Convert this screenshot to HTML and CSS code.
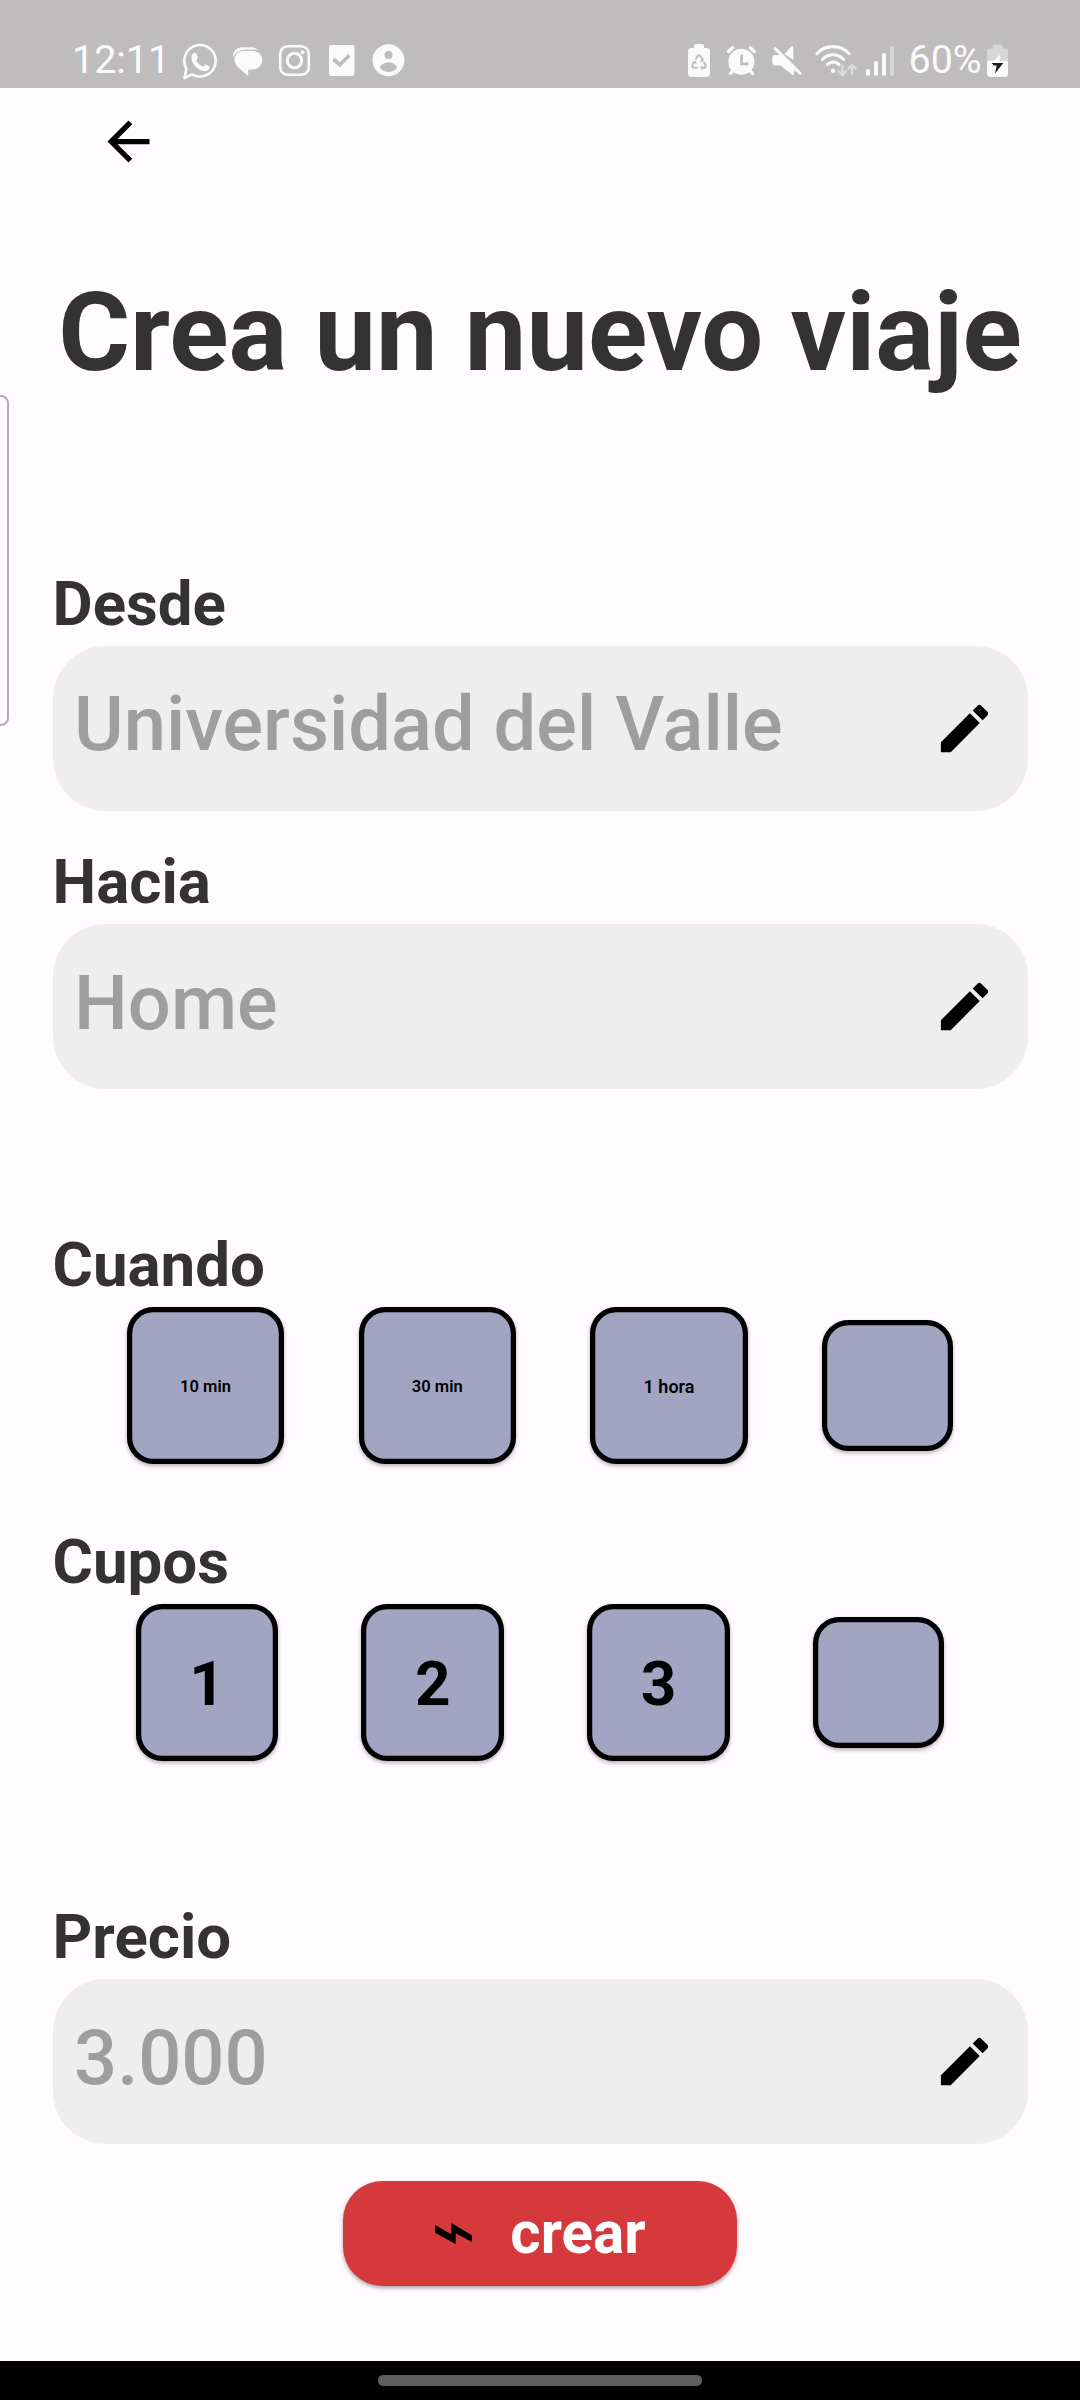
FILE: index.html
```html
<!DOCTYPE html>
<html lang="es">
<head>
<meta charset="utf-8">
<title>Crea un nuevo viaje</title>
<link rel="stylesheet" href="styles.css">
</head>
<body>
<div class="screen">
  <header class="status">
    <span class="clock">12:11</span>
    <svg class="notifications" viewBox="180 40 230 40" width="230" height="40">
      <g fill="none" stroke="#fafafa" stroke-width="2.6" stroke-linejoin="round">
        <path d="M184.400 78.200l2-9.600a15.700 15.700 0 1 1 5.700 5.700z"/>
        <rect x="280.2" y="46.2" width="28.6" height="28.6" rx="7.5"/>
        <circle cx="294.5" cy="60.5" r="7.2" stroke-width="3"/>
      </g>
      <g fill="#fafafa">
        <path d="M192.300 54.500c.8-1.700 2.900-2.200 3.900-1.200l1.600 4c.3 1.200-1.700 2.300-1.500 3.300 1.400 2.700 3.600 4.800 6.500 6 1.200.2 2-2.500 3.200-2.200l3.500 1.800c.8 1.700-.7 4-2.700 4.600-4.700 1.300-9.700-2-12.700-6-2.200-3-3.500-7-1.800-10.300z"/>
        <circle cx="302.600" cy="52.300" r="2"/>
        <path d="M233.200 58c-1.100-6 3-10.800 9-10.800h8c4 0 6.500 1.200 8 3.200-4-1.300-9-1-13-.8-6 .4-10.500 3.200-12 8.400z"/>
        <path d="M244 50.800h8.500c6 0 9.800 4.200 9.800 9.200s-4 9.400-9.800 9.400h-4.300V76l-7.500-6.500c-3.500-3-6.200-6-6.200-9.800 0-5 4-8.900 9.500-8.900z"/>
        <path fill-rule="evenodd" d="M331 45h21.500a2 2 0 0 1 2 2v27a2 2 0 0 1-2 2H331a2 2 0 0 1-2-2V47a2 2 0 0 1 2-2zM332.300 60.700l7.500 6.600 10.600-10.600-2.200-2.700-8.400 8.200-5-4.600z"/>
        <path fill-rule="evenodd" d="M388.500 44.300a16 16 0 1 1 0 32 16 16 0 0 1 0-32zM388.500 51a4 4 0 1 0 0 8 4 4 0 0 0 0-8zM379.700 67.800c3.500 5.500 14 5.500 17.600 0-2.500-7-15-7-17.600 0z"/>
      </g>
    </svg>
    <svg class="indicators" viewBox="680 40 180 40" width="180" height="40">
      <g fill="#fafafa">
        <path d="M695.500 44h7a1.500 1.500 0 0 1 1.500 1.500V48h2.500a3.500 3.500 0 0 1 3.500 3.500v22a3.500 3.500 0 0 1-3.500 3.500h-15a3.500 3.500 0 0 1-3.500-3.500v-22a3.500 3.500 0 0 1 3.500-3.500h2.500v-2.500a1.500 1.500 0 0 1 1.500-1.500z"/>
        <circle cx="741.400" cy="61.800" r="13"/>
        <path d="M784.500 54l7-7.700q1.800-1 1.800.5v13.200z"/>
        <path d="M772.300 58.200q0-3.300 3.500-3.300h6l12.300 12V74q-.3 1.500-2 .8l-11.500-9.300h-4.800q-3.500 0-3.500-3.300z"/>
        <circle cx="833" cy="70.700" r="2.200"/>
      </g>
      <g fill="none" stroke="#fafafa" stroke-width="3.400" stroke-linecap="round">
        <path d="M728.500 51.500l4-3.700M754.300 51.500l-4-3.700M732.500 71l-2 2.500M750.500 71l2 2.500"/>
        <path d="M775.300 48.600l24.700 24.700" stroke-width="3"/>
        <path d="M817 53.500c8.500-9.200 23.500-9.200 32 0M822.500 59.300c6-6 15-6 21 0M827.500 64.500c3.500-3.200 8-3.200 11.500 0" stroke-width="3.100"/>
      </g>
      <path d="M741.600 54.500v9.400h6.800" fill="none" stroke="#bebcbc" stroke-width="2.600"/>
      <g fill="none" stroke="#bebcbc" stroke-width="2">
        <path d="M695.500 59.500l2.200-3.600q1.300-1.500 2.600 0l2.200 3.600M703.800 62l1.700 2.900q.8 2.500-1.800 2.900h-2.700M697.500 67.800h-3.200q-2.600-.4-1.800-2.900l1.900-3.300"/>
      </g>
      <path d="M703.500 57.800v4h-4zM702.500 65.400v4.800l-2.500-2.400zM692.300 61.500l3.500-.8.800 3.600z" fill="#bebcbc"/>
      <path d="M842.300 66v9M838.800 71.500l3.500 3.500 3.500-3.500M852 74v-9M848.500 68.500l3.500-3.500 3.500 3.500" fill="none" stroke="#dadada" stroke-width="2.600" stroke-linecap="round"/>
    </svg>
    <div class="signal"><i class="bar bar-1"></i><i class="bar bar-2"></i><i class="bar bar-3"></i><i class="bar bar-4"></i></div>
    <span class="percent">60%</span>
    <svg class="battery" viewBox="987 44 22 34" width="22" height="34">
      <path d="M992.500 48.500V46a1.500 1.500 0 0 1 1.500-1.500h7a1.500 1.500 0 0 1 1.500 1.500v2.500h2.500a3.200 3.200 0 0 1 3 3V61h-21v-9.500a3.200 3.200 0 0 1 3-3z" fill="#d8d7d7"/>
      <path d="M987 63h21v10.500a3.500 3.500 0 0 1-3.500 3.500h-14a3.500 3.500 0 0 1-3.500-3.500z" fill="#fafafa"/>
      <path d="M987 61h21v2.500h-21z" fill="#fafafa"/>
      <path d="M999.500 55l-7 7h6.500l1.500-6z" fill="#fafafa"/>
      <path d="M991.700 63h11.500l-8.200 10.500 1.700-8h-3z" fill="#1c1c1c"/>
    </svg>
  </header>
  <div class="edge-panel"></div>
  <main class="content">
    <nav class="toolbar">
      <svg class="icon" viewBox="0 0 24 24"><path d="M20 11H7.830l5.590-5.590L12 4l-8 8 8 8 1.410-1.410L7.830 13H20v-2z"/></svg>
    </nav>
    <h1 class="title">Crea un nuevo viaje</h1>

    <section class="group group-from">
      <h2 class="label">Desde</h2>
      <div class="field"><span class="value">Universidad del Valle</span><svg class="icon" viewBox="0 0 24 24"><path d="M3 17.250V21h3.750L17.810 9.940l-3.750-3.750L3 17.250zM20.710 7.040c.39-.39.39-1.020 0-1.410l-2.340-2.340c-.39-.39-1.020-.39-1.410 0l-1.830 1.830 3.750 3.750 1.830-1.830z"/></svg></div>
    </section>
    <section class="group group-to">
      <h2 class="label">Hacia</h2>
      <div class="field"><span class="value">Home</span><svg class="icon" viewBox="0 0 24 24"><path d="M3 17.250V21h3.750L17.810 9.940l-3.750-3.750L3 17.250zM20.710 7.040c.39-.39.39-1.020 0-1.410l-2.340-2.340c-.39-.39-1.020-.39-1.410 0l-1.830 1.830 3.750 3.750 1.830-1.830z"/></svg></div>
    </section>
    <section class="group group-when">
      <h2 class="label">Cuando</h2>
      <div class="options">
        <button class="option wide">10 min</button>
        <button class="option wide">30 min</button>
        <button class="option wide hour">1 hora</button>
        <button class="option empty" aria-label="Otro"></button>
      </div>
    </section>
    <section class="group group-seats">
      <h2 class="label">Cupos</h2>
      <div class="options">
        <button class="option seat">1</button>
        <button class="option seat">2</button>
        <button class="option seat">3</button>
        <button class="option empty" aria-label="Otro"></button>
      </div>
    </section>
    <section class="group group-price">
      <h2 class="label">Precio</h2>
      <div class="field"><span class="value">3.000</span><svg class="icon" viewBox="0 0 24 24"><path d="M3 17.250V21h3.750L17.810 9.940l-3.750-3.750L3 17.250zM20.710 7.040c.39-.39.39-1.020 0-1.410l-2.340-2.340c-.39-.39-1.020-.39-1.410 0l-1.830 1.830 3.750 3.750 1.830-1.830z"/></svg></div>
    </section>
    <button class="create">
      <svg class="bolt" viewBox="0 0 37 21" width="37" height="21"><path d="M0 2l16.300 9.300V0L37 12.300V19l-16.300-8.700V21L0 9.700z"/></svg>
      <span class="create-text">crear</span>
    </button>
  </main>
  <footer class="gesture-bar"><div class="pill"></div></footer>
</div>
</body>
</html>
```
FILE: styles.css
```css
* { box-sizing: border-box; }

body {
  margin: 0;
  font-family: Roboto, sans-serif;
  background: #fffbff;
}

.screen {
  position: relative;
  display: flex;
  flex-direction: column;
  width: 1080px;
  height: 2400px;
  overflow: hidden;
}

/* System status bar */
.status {
  display: flex;
  align-items: flex-start;
  height: 88px;
  flex: none;
  padding-top: 40px;
  background: #bebcbc;
  color: #fafafa;
}
.clock, .percent {
  font-size: 39.400px;
  line-height: 40px;
  white-space: nowrap;
}
.clock { width: 108px; margin-left: 72px; }
.indicators { margin-left: 270px; }
.signal {
  display: flex;
  align-items: flex-end;
  gap: 4.400px;
  height: 36px;
  margin-left: 6px;
}
.bar { width: 3.600px; border-radius: 2px; background: #fafafa; }
.bar-1 { height: 7px; }
.bar-2 { height: 15px; }
.bar-3 { height: 23px; }
.bar-4 { height: 30px; background: #d8d7d7; }
.percent { width: 78px; margin-left: 15px; }
.battery { margin-top: 4px; }

/* Handle of the edge panel, over the page's left side */
.edge-panel {
  position: absolute;
  left: -12px;
  top: 395px;
  width: 21px;
  height: 331px;
  border: 2px solid #b0aeb0;
  border-radius: 8px;
  background: #fffdff;
}

.content {
  display: flex;
  flex-direction: column;
  flex: 1;
  padding: 0 52.500px;
}
.icon { width: 63px; height: 63px; flex: none; fill: #000; }
.toolbar { height: 85px; padding: 22px 0 0 44.500px; }
.toolbar .icon { display: block; }

.title {
  margin: 95.500px -20px 0;
  font-size: 109.800px;
  line-height: 128px;
  font-weight: 700;
  text-align: center;
  white-space: nowrap;
  color: #333;
}
.label {
  margin: 0;
  height: 78.700px;
  font-size: 61.800px;
  line-height: 74px;
  font-weight: 700;
  color: #333;
}
.group-from { margin-top: 170.500px; }
.group-to { margin-top: 34.600px; }
.group-when { margin-top: 139.300px; }
.group-seats { margin-top: 60.700px; }
.group-price { margin-top: 138.800px; }

.field {
  display: flex;
  align-items: center;
  justify-content: space-between;
  height: 165px;
  padding: 0 31.800px 0 21.500px;
  border-radius: 52.500px;
  background: #eee;
}
.value {
  font-size: 75.900px;
  line-height: 90px;
  font-weight: 500;
  color: #9e9e9e;
  padding-bottom: 5.500px;
}

/* The outline is an inset shadow, which keeps its fractional width */
.options {
  display: flex;
  align-items: center;
  justify-content: space-evenly;
  height: 157.500px;
}
.option {
  height: 157.500px;
  padding: 2px 0 0;
  border: 0;
  border-radius: 26.250px;
  background: #a3a4c2;
  box-shadow: inset 0 0 0 5.250px #000, 0 2px 4px rgba(0, 0, 0, .3);
  font-family: inherit;
  color: #000;
}
.wide { width: 157.500px; font-size: 16.500px; font-weight: 600; }
.hour { font-size: 18px; }
.seat { width: 142.700px; font-size: 62px; font-weight: 700; }
.empty { width: 131.250px; height: 131.250px; }

.create {
  display: flex;
  align-items: center;
  align-self: center;
  width: 394px;
  height: 105px;
  margin-top: 36.900px;
  padding: 0 0 0 92px;
  gap: 38.300px;
  border: 0;
  border-radius: 39.400px;
  background: #d6393c;
  box-shadow: 0 2px 4px rgba(0, 0, 0, .35);
  font-family: inherit;
  font-size: 58.300px;
  font-weight: 700;
  color: #fff;
}
.create-text { padding-bottom: 1px; }

/* System gesture bar */
.gesture-bar {
  display: flex;
  justify-content: center;
  height: 39px;
  flex: none;
  padding-top: 14px;
  background: #000;
}
.pill { width: 324px; height: 11px; border-radius: 5px; background: #5e5e5e; }
```
